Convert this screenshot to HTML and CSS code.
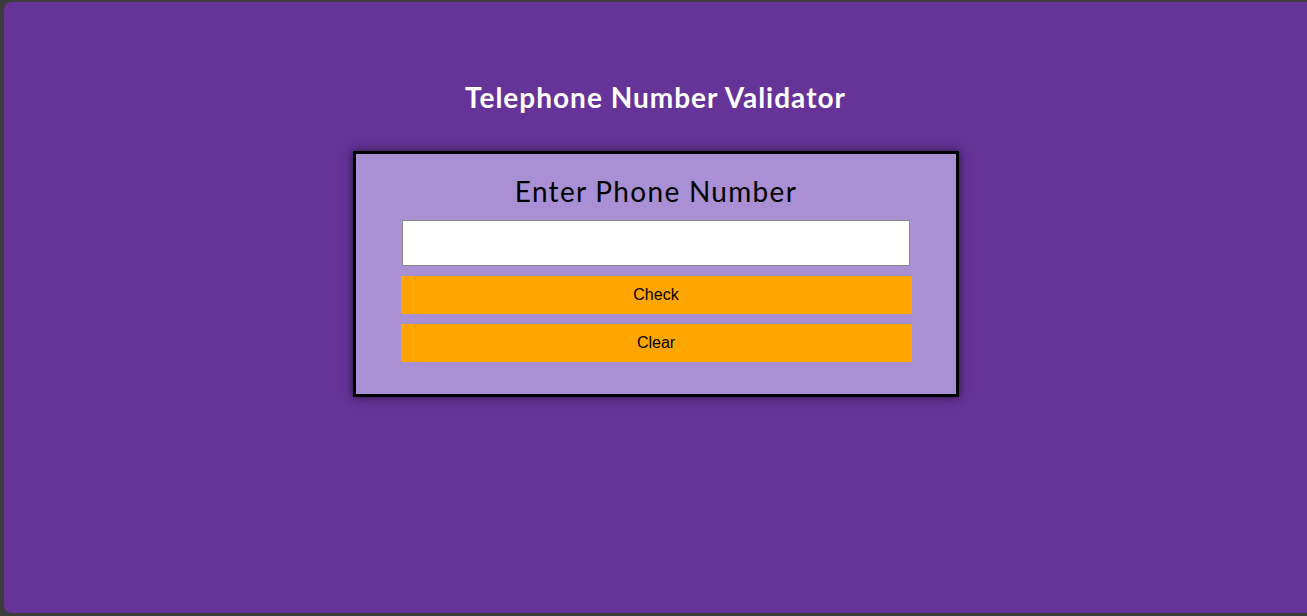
FILE: index.html
```html
<!DOCTYPE html>
<html lang="en">
<head>
<meta charset="utf-8">
<title>Telephone Number Validator</title>
<link rel="stylesheet" href="styles.css">
</head>
<body>
<main class="frame">
  <h1 class="title">Telephone Number Validator</h1>
  <section class="card">
    <h2 class="card-title">Enter Phone Number</h2>
    <input class="phone-input" type="text" aria-label="Phone number">
    <button class="btn" type="button">Check</button>
    <button class="btn" type="button">Clear</button>
  </section>
</main>
</body>
</html>
```
FILE: styles.css
```css
html, body {
  margin: 0;
  padding: 0;
  height: 100%;
}
body {
  background: #3c3c3c;
  padding: 2px 0 3px 4px;
  box-sizing: border-box;
  overflow: hidden;
}
.frame {
  height: 100%;
  background: #663399;
  border-radius: 8px 0 0 8px;
  box-sizing: border-box;
  padding-top: 78px;
  display: flex;
  flex-direction: column;
  align-items: center;
}
.title {
  margin: 0 0 37px;
  font-family: "Lato", "Noto Sans", sans-serif;
  font-weight: 700;
  font-size: 28px;
  line-height: 34px;
  letter-spacing: 1px;
  color: #ffffff;
  text-align: center;
}
.card {
  width: 600px;
  box-sizing: content-box;
  border: 3px solid #000;
  background: #a990d5;
  box-shadow: 0 0 10px rgba(0, 0, 0, 0.6);
  padding: 20px 0 32px;
  margin-left: 1px;
  display: flex;
  flex-direction: column;
  align-items: center;
}
.card-title {
  margin: 0 0 12px;
  font-family: "Lato", "Noto Sans", sans-serif;
  font-weight: 400;
  font-size: 28px;
  line-height: 34px;
  letter-spacing: 1.3px;
  color: #000;
}
.phone-input {
  width: 508px;
  height: 46px;
  box-sizing: border-box;
  border: 1px solid #8a8a8a;
  background: #fff;
  margin: 0 1px 0 0;
  padding: 0 8px;
  font-family: "Liberation Sans", Arial, sans-serif;
  font-size: 16px;
}
.btn {
  width: 511px;
  height: 38px;
  margin-top: 10px;
  border: none;
  background: #ffa500;
  color: #000;
  font-family: "Liberation Sans", Arial, sans-serif;
  font-size: 16px;
  cursor: pointer;
}
```
